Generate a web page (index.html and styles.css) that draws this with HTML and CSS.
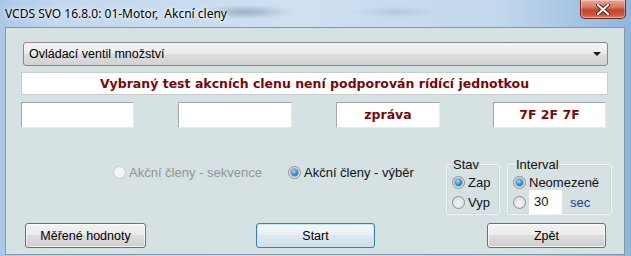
FILE: index.html
```html
<!DOCTYPE html>
<html lang="cs">
<head>
    <meta charset="UTF-8">
    <title>VCDS SVO - Akcní cleny</title>
    <link rel="stylesheet" href="styles.css">
</head>
<body>
    <div class="window">
        <div class="titlebar">
            <span class="title">VCDS SVO 16.8.0: 01-Motor,  Akcní cleny</span>
            <div class="close">
                <svg width="14" height="11" viewBox="0 0 14 11">
                    <path d="M2 1 L12 10 M12 1 L2 10" stroke="#5a1a10" stroke-width="4" stroke-linecap="round"/>
                    <path d="M2 1 L12 10 M12 1 L2 10" stroke="#ffffff" stroke-width="2.2" stroke-linecap="round"/>
                </svg>
            </div>
        </div>

        <div class="client">
            <div class="combo">
                <span>Ovládací ventil množství</span>
                <span class="arrow"></span>
            </div>

            <div class="message">Vybraný test akcních clenu není podporován rídící jednotkou</div>

            <div class="fields">
                <div class="field f1"></div>
                <div class="field f2"></div>
                <div class="field f3">zpráva</div>
                <div class="field f4">7F 2F 7F</div>
            </div>

            <div class="options">
                <label class="radio mode disabled"><span class="dot"></span>Akční členy - sekvence</label>
                <label class="radio mode"><span class="dot on"></span>Akční členy - výběr</label>

                <fieldset class="group stav">
                    <legend>Stav</legend>
                    <div class="row"><span class="dot on"></span>Zap</div>
                    <div class="row"><span class="dot"></span>Vyp</div>
                </fieldset>

                <fieldset class="group interval">
                    <legend>Interval</legend>
                    <div class="row"><span class="dot on"></span>Neomezeně</div>
                    <div class="row">
                        <span class="dot"></span>
                        <span class="num">30</span>
                        <span class="sec">sec</span>
                    </div>
                </fieldset>
            </div>

            <div class="buttons">
                <button class="btn b1">Měřené hodnoty</button>
                <button class="btn b2 default">Start</button>
                <button class="btn b3">Zpět</button>
            </div>
        </div>
    </div>
</body>
</html>
```

FILE: styles.css
```css
*{
    box-sizing: border-box;
}
html, body{
    margin: 0;
    padding: 0;
}
body{
    width: 631px;
    height: 256px;
    overflow: hidden;
    font-family: "Liberation Sans", Arial, sans-serif;
    font-size: 13px;
    color: #111;
}
.window{
    height: 256px;
    display: flex;
    flex-direction: column;
    padding: 0 6px 1px 5px;
    background:
        radial-gradient(ellipse 48px 7px at 245px 12px, rgba(95,115,140,.45), rgba(95,115,140,0)),
        radial-gradient(ellipse 45px 6px at 395px 12px, rgba(120,140,165,.25), rgba(120,140,165,0)),
        linear-gradient(to right, #a9c8e6 0px, #c3d8ee 60px, #cfe0f1 300px, #c2d7ed 500px, #8fb5dc 631px);
}

/* title bar */
.titlebar{
    height: 27px;
    display: flex;
    align-items: flex-start;
    justify-content: space-between;
    flex: none;
}
.title{
    white-space: pre;
    font-family: "Noto Sans", "Liberation Sans", sans-serif;
    font-size: 12px;
    margin-top: 5px;
    color: #000;
    text-shadow: 0 0 6px #fff, 0 0 3px #fff;
}
.close{
    width: 46px;
    height: 19px;
    margin-right: -1px;
    border: 1px solid #6d2a1e;
    border-top: 0;
    border-radius: 0 0 5px 5px;
    background: linear-gradient(#e8a796 0%, #d67a63 40%, #c2442a 55%, #cc5a3e 85%, #dc8a6c 100%);
    box-shadow: inset 0 0 0 1px rgba(255,255,255,.35);
    display: flex;
    align-items: center;
    justify-content: center;
}

/* client area */
.client{
    flex: 1;
    border: 1px solid #8497a8;
    background: #d5e1e3;
    padding: 14px 16px 0 15px;
}
.combo{
    margin-left: 2px;
    width: 585px;
    height: 24px;
    border: 1px solid #8a8a8a;
    border-radius: 3px;
    background: linear-gradient(#f3f3f3 0%, #ebebeb 50%, #dddddd 51%, #d2d2d2 100%);
    display: flex;
    align-items: center;
    justify-content: space-between;
    padding: 0 6px 0 5px;
    font-size: 12.5px;
    color: #000;
}
.arrow{
    width: 0;
    height: 0;
    border-left: 4px solid transparent;
    border-right: 4px solid transparent;
    border-top: 4px solid #1a1a1a;
}
.message{
    margin-top: 6px;
    width: 587px;
    height: 23px;
    background: #fff;
    border: 1px solid #c9cfd1;
    text-align: center;
    line-height: 21px;
    font-family: "DejaVu Sans", sans-serif;
    font-weight: bold;
    font-size: 12.5px;
    color: #7a0808;
}
.fields{
    display: flex;
    margin-top: 7px;
    height: 26px;
}
.field{
    flex: none;
    height: 26px;
    background: #fff;
    border: 1px solid #e4ebec;
    border-top-color: #a3a8ab;
    border-left-color: #a3a8ab;
    text-align: center;
    line-height: 24px;
    font-family: "DejaVu Sans", sans-serif;
    font-weight: bold;
    font-size: 12.5px;
    color: #7a0808;
}
.f1{ width: 113px; }
.f2{ width: 114px; margin-left: 44px; }
.f3{ width: 104px; margin-left: 44px; }
.f4{ width: 113px; margin-left: 53px; }

/* radio buttons */
.options{
    display: flex;
    margin-top: 29px;
    height: 58px;
}
.options > *{
    flex: none;
}
.radio{
    display: flex;
    align-items: center;
    height: 15px;
    margin-top: 8px;
}
.mode.disabled{
    width: 175px;
    margin-left: 92px;
    color: #8f9598;
}
.mode{
    width: 158px;
}
.dot{
    flex: none;
    width: 13px;
    height: 13px;
    margin-right: 3px;
    border-radius: 50%;
    border: 1px solid #8e9091;
    background: radial-gradient(circle at 50% 60%, #f6f6f6 0%, #e2e2e2 60%, #cfcfcf 100%);
    display: flex;
    align-items: center;
    justify-content: center;
}
.dot.on::after{
    content: "";
    width: 7px;
    height: 7px;
    border-radius: 50%;
    background: radial-gradient(circle at 40% 35%, #a8dcfb 0%, #3f97d6 45%, #0f4a86 100%);
    box-shadow: 0 0 0 1px rgba(30,70,110,.35);
}
.disabled .dot{
    border-color: #c6cbcd;
    background: #f3f5f5;
}
.group{
    margin: 0;
    height: 58px;
    padding: 0 4px 0 5px;
    border: 1px solid #f1f5f5;
    border-radius: 3px;
    box-shadow: inset 0 0 0 1px rgba(180,195,200,.25);
}
.group legend{
    padding: 0 1px;
    line-height: 15px;
    font-size: 13px;
}
.stav{
    width: 54px;
}
.interval{
    width: 105px;
    margin-left: 7px;
}
.interval legend{
    margin-left: 2px;
}
.row{
    display: flex;
    align-items: center;
    height: 20px;
    font-size: 13px;
}
.num{
    width: 33px;
    height: 24px;
    background: #fff;
    line-height: 24px;
    padding-left: 5px;
    flex: none;
}
.sec{
    margin-left: 8px;
    color: #1b3d94;
}

/* buttons */
.buttons{
    display: flex;
    margin-top: 8px;
}
.btn{
    flex: none;
    height: 25px;
    border: 1px solid #707070;
    border-radius: 3px;
    background: linear-gradient(#f2f2f2 0%, #ebebeb 49%, #dddddd 50%, #cfcfcf 100%);
    box-shadow: inset 0 0 0 1px rgba(255,255,255,.7);
    font-family: "Liberation Sans", Arial, sans-serif;
    font-size: 12.5px;
    color: #000;
    padding: 0;
}
.b1{ width: 121px; margin-left: 4px; }
.b2{ width: 119px; margin-left: 110px; }
.b3{ width: 119px; margin-left: 112px; }
.btn.default{
    border-color: #3c7fb1;
    background: linear-gradient(#f3f8fb 0%, #e9f1f6 49%, #dde8ef 50%, #d2e0e9 100%);
    box-shadow: inset 0 0 0 1px #c4e5f6;
}
```
